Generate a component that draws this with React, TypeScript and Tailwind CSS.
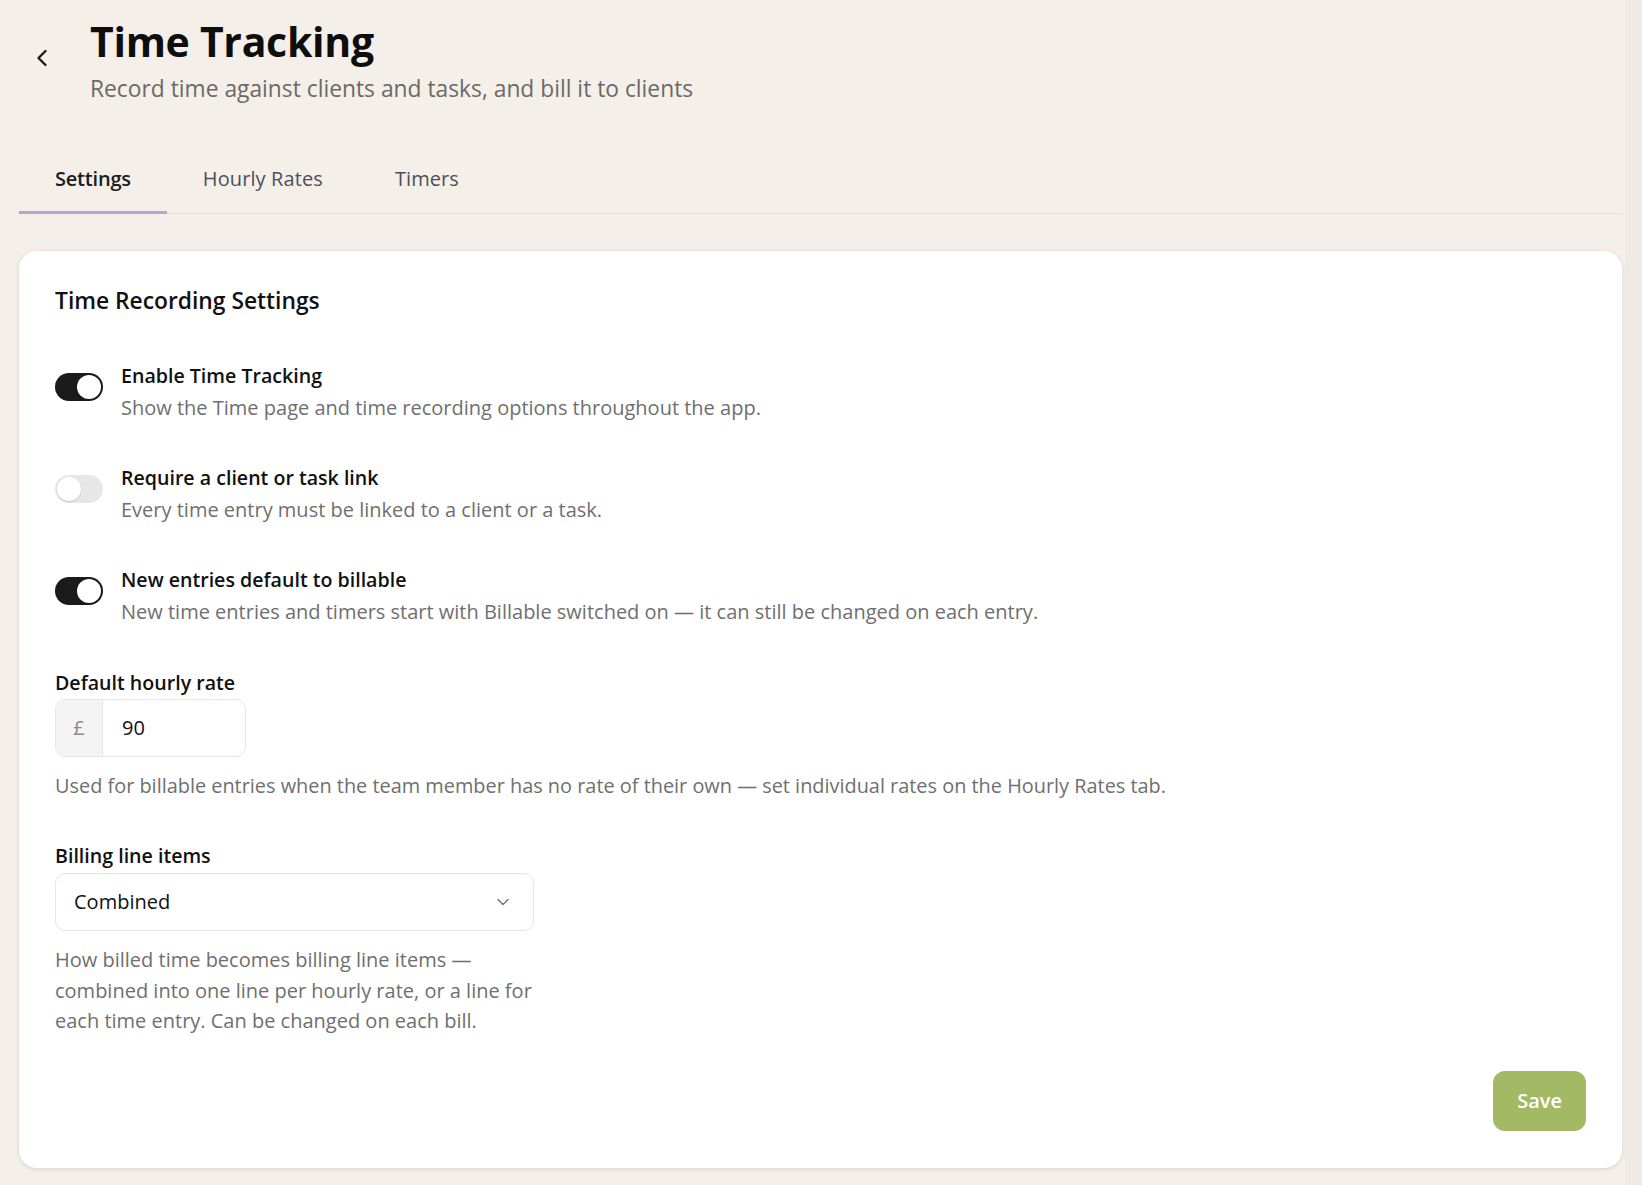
import { ChevronDown, ChevronLeft } from "lucide-react";

type ToggleRowProps = {
  on: boolean;
  title: string;
  description: string;
};

function Toggle({ on }: { on: boolean }) {
  return (
    <div
      className={`w-[48px] h-[28px] rounded-full p-[2px] flex shrink-0 ${
        on ? "bg-[#1b1b1b] justify-end" : "bg-[#e7e7e7] justify-start"
      }`}
    >
      <div className="w-[24px] h-[24px] rounded-full bg-white shadow-[0_1px_2px_rgba(0,0,0,0.15)]" />
    </div>
  );
}

function ToggleRow({ on, title, description }: ToggleRowProps) {
  return (
    <div className="flex items-start gap-[18px]">
      <div className="mt-[12px]">
        <Toggle on={on} />
      </div>
      <div className="flex flex-col gap-[2px]">
        <div className="text-[19.6px] leading-[30px] font-semibold text-[#111111]">
          {title}
        </div>
        <div className="text-[20px] leading-[30px] text-[#6f6f6f]">{description}</div>
      </div>
    </div>
  );
}

export default function App() {
  const tabs = ["Settings", "Hourly Rates", "Timers"];
  return (
    <div
      className="min-h-screen bg-[#f4f0e9] flex"
      style={{ fontFamily: '"Open Sans", "Noto Sans", sans-serif' }}
    >
      <main className="flex-1 pl-[19px] pr-[3px] pb-[18px]">
        <header className="flex items-start pt-[14px] pl-[9px]">
          <button className="w-[62px] pt-[30px] text-[#1a1a1a]">
            <ChevronLeft size={28} strokeWidth={2} />
          </button>
          <div>
            <h1 className="text-[41px] leading-[54px] font-bold text-[#0e0e0e] tracking-[-0.3px]">
              Time Tracking
            </h1>
            <p className="mt-[5px] text-[22.8px] leading-[32px] text-[#6c6965]">
              Record time against clients and tasks, and bill it to clients
            </p>
          </div>
        </header>

        <nav className="flex border-b border-[#e4e0d9] mt-[60px]">
          {tabs.map((t, i) => (
            <button
              key={t}
              className={`px-[36px] pb-[18px] -mb-px border-b-[3px] text-[20px] leading-[28px] ${
                i === 0
                  ? "border-[#b6a6d4] text-[#1b1c26] font-semibold tracking-[-0.2px]"
                  : "border-transparent text-[#4b4f5b] font-medium tracking-[0.1px]"
              }`}
            >
              {t}
            </button>
          ))}
        </nav>

        <section className="mt-[37px] bg-white rounded-[18px] shadow-[0_1px_4px_rgba(0,0,0,0.13)] px-[36px] pt-[34px] pb-[37px]">
          <h2 className="text-[22.8px] leading-[32px] font-semibold text-[#111111]">
            Time Recording Settings
          </h2>

          <div className="mt-[44px] flex flex-col gap-[40px]">
            <ToggleRow
              on
              title="Enable Time Tracking"
              description="Show the Time page and time recording options throughout the app."
            />
            <ToggleRow
              on={false}
              title="Require a client or task link"
              description="Every time entry must be linked to a client or a task."
            />
            <ToggleRow
              on
              title="New entries default to billable"
              description="New time entries and timers start with Billable switched on — it can still be changed on each entry."
            />
          </div>

          <div className="mt-[41px]">
            <label className="block text-[19.6px] leading-[30px] font-semibold text-[#111111]">
              Default hourly rate
            </label>
            <div className="mt-[1px] flex w-[191px] h-[58px] rounded-[10px] border border-[#e6e6e6] overflow-hidden">
              <span className="w-[47px] bg-[#f4f4f4] border-r border-[#e6e6e6] flex items-center justify-center text-[20px] text-[#8a8a8a]">
                £
              </span>
              <span className="flex items-center pl-[19px] text-[20px] text-[#111111]">90</span>
            </div>
            <p className="mt-[14px] text-[19.9px] leading-[30px] text-[#6f6f6f]">
              Used for billable entries when the team member has no rate of their own — set
              individual rates on the Hourly Rates tab.
            </p>
          </div>

          <div className="mt-[40px]">
            <label className="block text-[19.6px] leading-[30px] font-semibold text-[#111111]">
              Billing line items
            </label>
            <div className="mt-[2px] w-[479px] h-[58px] rounded-[10px] border border-[#e6e6e6] flex items-center justify-between pl-[18px] pr-[20px]">
              <span className="text-[20px] text-[#111111]">Combined</span>
              <ChevronDown size={20} strokeWidth={1.8} className="text-[#777777]" />
            </div>
            <p className="mt-[14px] w-[479px] text-[20px] leading-[30.5px] text-[#6f6f6f]">
              How billed time becomes billing line items — combined into one line per hourly
              rate, or a line for each time entry. Can be changed on each bill.
            </p>
          </div>

          <div className="mt-[34px] flex justify-end">
            <button className="h-[60px] px-[24px] rounded-[12px] bg-[#a3b963] text-white text-[20px] font-semibold">
              Save
            </button>
          </div>
        </section>
      </main>
      <aside className="w-[17px] bg-[#efebe4]" />
    </div>
  );
}
